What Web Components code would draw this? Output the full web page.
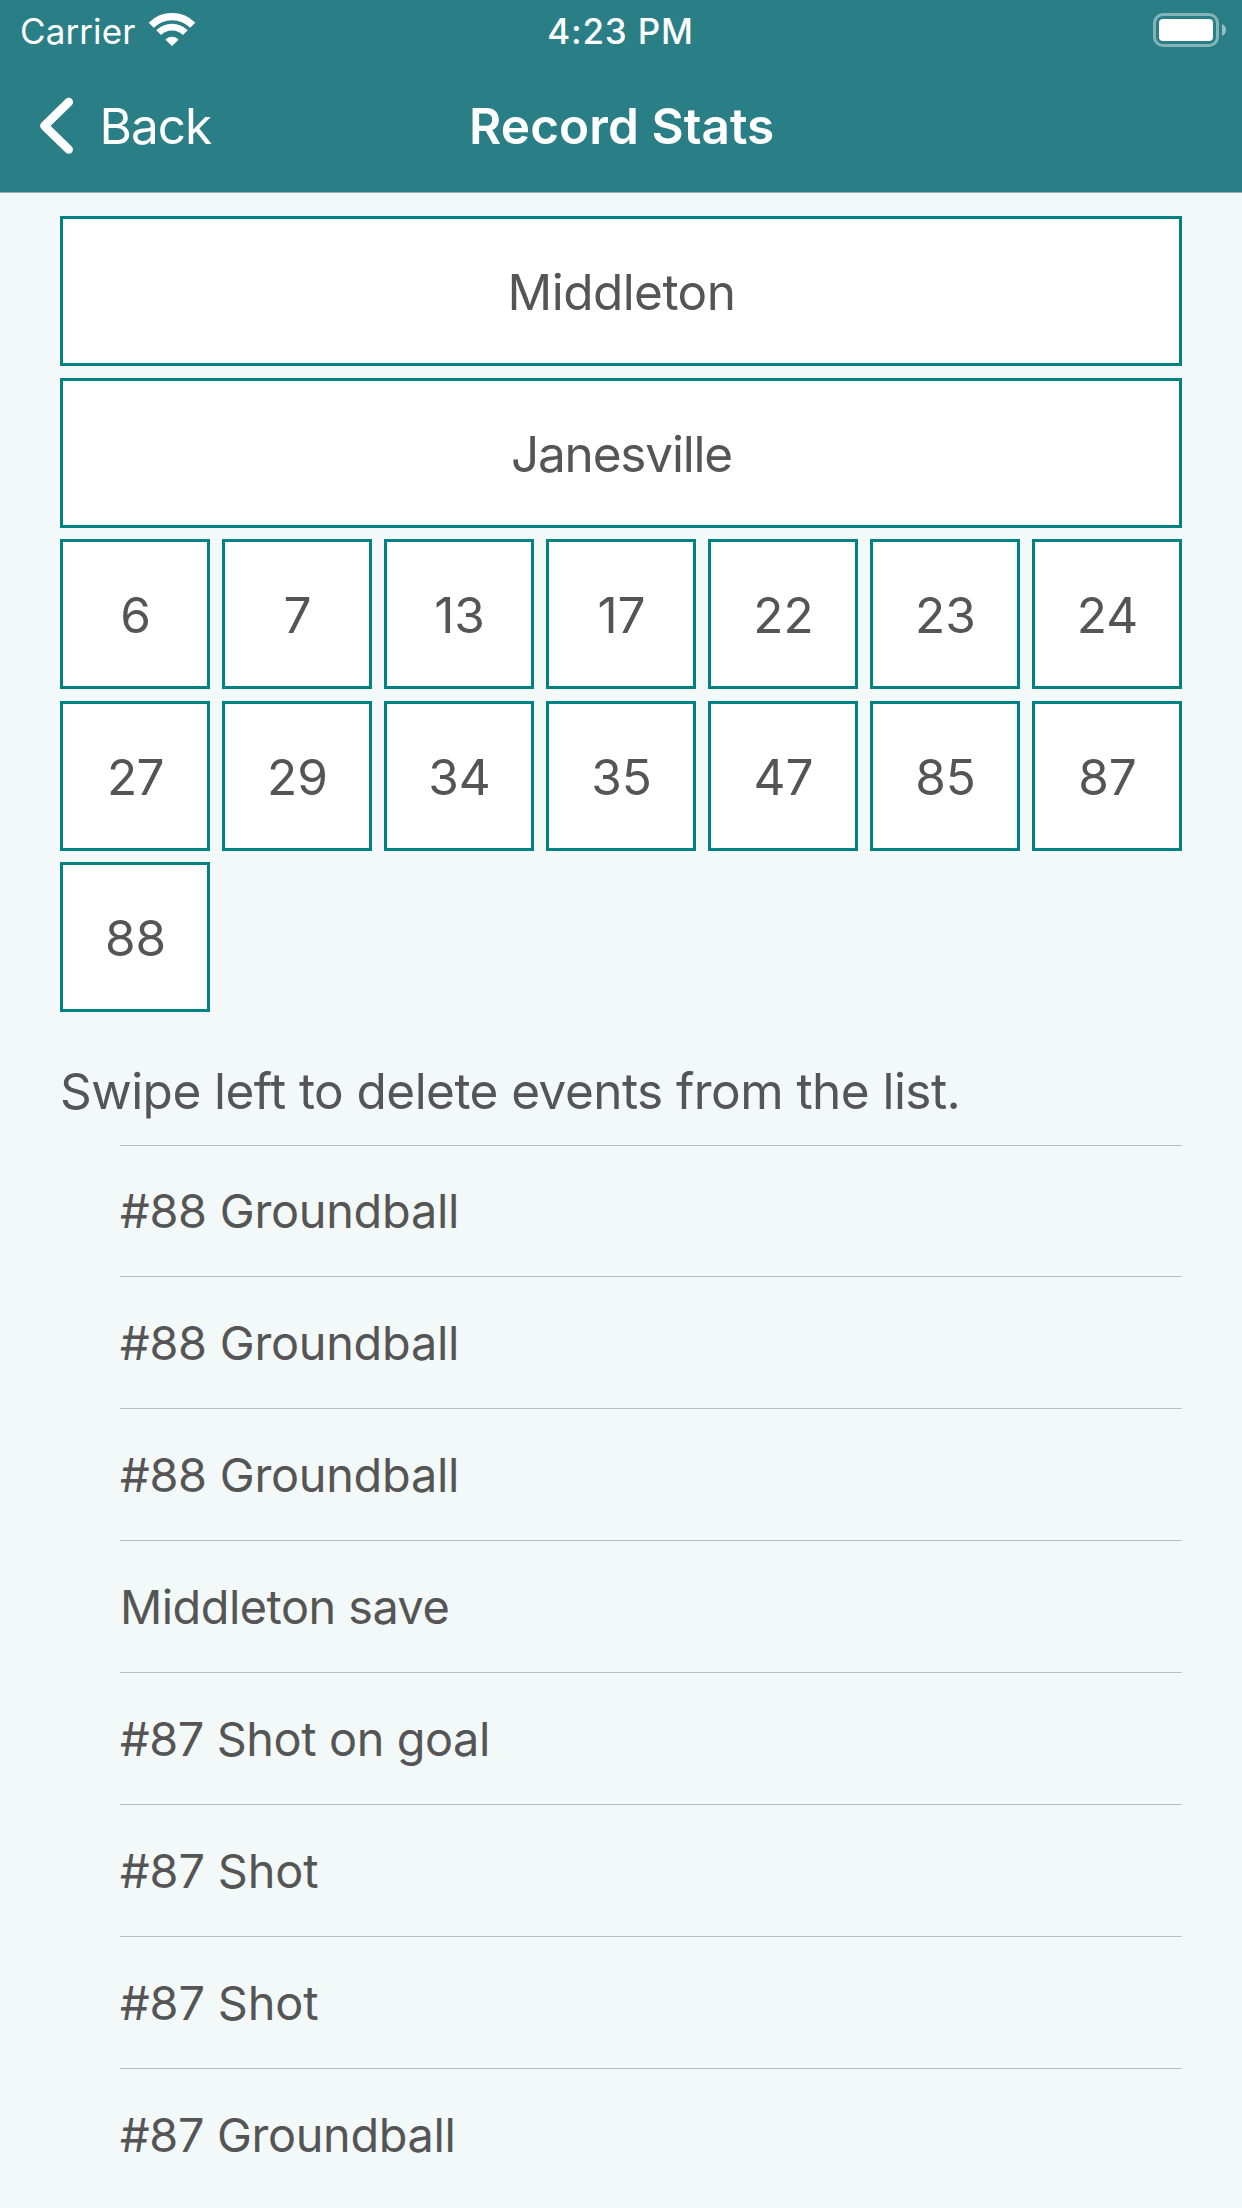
<!DOCTYPE html>
<html lang="en">
<head>
<meta charset="utf-8">
<title>Record Stats</title>
<style>
  html, body { margin: 0; padding: 0; }
  body { width: 1242px; height: 2208px; overflow: hidden; background: #f3f9f9; color: #555; font-family: Inter, "Liberation Sans", sans-serif; }
</style>
</head>
<body>
<stats-screen>
  <status-bar slot="header"><span slot="carrier">Carrier</span><span slot="time">4:23 PM</span></status-bar>
  <nav-bar slot="header"><span slot="back">Back</span><span slot="title">Record Stats</span></nav-bar>
  <stat-tile wide style="letter-spacing:-.55px">Middleton</stat-tile>
  <stat-tile wide style="letter-spacing:-1.18px">Janesville</stat-tile>
  <stat-tile>6</stat-tile><stat-tile>7</stat-tile><stat-tile>13</stat-tile><stat-tile>17</stat-tile><stat-tile>22</stat-tile><stat-tile>23</stat-tile><stat-tile>24</stat-tile>
  <stat-tile style="letter-spacing:-.6px">27</stat-tile><stat-tile>29</stat-tile><stat-tile>34</stat-tile><stat-tile>35</stat-tile><stat-tile>47</stat-tile><stat-tile>85</stat-tile><stat-tile>87</stat-tile>
  <stat-tile>88</stat-tile>
  <event-list slot="events">
    <span slot="hint">Swipe left to delete events from the list.</span>
    <event-row first>#88 Groundball</event-row>
    <event-row>#88 Groundball</event-row>
    <event-row>#88 Groundball</event-row>
    <event-row style="letter-spacing:-.5px">Middleton save</event-row>
    <event-row style="letter-spacing:-.388px">#87 Shot on goal</event-row>
    <event-row style="letter-spacing:-.1px">#87 Shot</event-row>
    <event-row style="letter-spacing:-.1px">#87 Shot</event-row>
    <event-row style="letter-spacing:-.33px">#87 Groundball</event-row>
  </event-list>
</stats-screen>
<script>
const define = (name, html) => customElements.define(name, class extends HTMLElement {
  constructor() {
    super();
    const t = document.createElement('template');
    t.innerHTML = html;
    this.attachShadow({ mode: 'open' }).append(t.content.cloneNode(true));
  }
});

define('stats-screen', `
<style>
  :host { display: flex; flex-direction: column; width: 1242px; height: 2208px; overflow: hidden; }
  header { display: flex; flex-direction: column; flex: none; height: 192px; background: #2a7e85; border-bottom: 1px solid #a5a6a8; color: #fff; }
  main { display: flex; flex-direction: column; padding: 23px 60px 0; }
  .tiles { display: grid; grid-template-columns: repeat(7, 150px); column-gap: 12px; row-gap: 11.5px; }
</style>
<header><slot name="header"></slot></header>
<main><div class="tiles"><slot></slot></div><slot name="events"></slot></main>`);

define('status-bar', `
<style>
  :host { display: grid; grid-template-columns: 1fr auto 1fr; box-sizing: border-box; height: 60px; font-size: 35px; line-height: 40px; }
  .left { display: flex; padding: 11px 0 0 20px; letter-spacing: .1px; }
  .time { padding: 11px 1px 0 0; font-weight: 550; letter-spacing: .8px; }
  .right { display: flex; justify-content: flex-end; padding: 13px 16px 0 0; }
  .wifi { margin: 2px 0 0 14px; }
  svg { display: block; flex: none; }
</style>
<div class="left"><slot name="carrier"></slot>
  <svg class="wifi" width="46" height="34" viewBox="0 0 46 34" fill="none" stroke="#fff">
    <path d="M2.25 12.25A29.35 29.35 0 0 1 43.75 12.25" stroke-width="7.1"/>
    <path d="M9.64 19.64A18.9 18.9 0 0 1 36.36 19.64" stroke-width="6.7"/>
    <path d="M23 32.5L16.9 26.6A9 9 0 0 1 29.1 26.6Z" fill="#fff" stroke-width="1" stroke-linejoin="round"/>
  </svg>
</div>
<div class="time"><slot name="time"></slot></div>
<div class="right">
  <svg width="73" height="34" viewBox="0 0 73 34">
    <rect x="1.5" y="1.5" width="63" height="31" rx="8.5" fill="none" stroke="#fff" stroke-opacity=".42" stroke-width="3"/>
    <rect x="6" y="6" width="54" height="22" rx="4" fill="#fff"/>
    <path d="M69 11C74.4 13.2 74.4 20.8 69 23Z" fill="#fff" fill-opacity=".5"/>
  </svg>
</div>`);

define('nav-bar', `
<style>
  :host { display: grid; grid-template-columns: 1fr auto 1fr; align-items: center; height: 132px; font-size: 49.5px; line-height: 60px; }
  .back { display: flex; align-items: center; gap: 26.5px; padding-left: 40px; letter-spacing: -1px; }
  .title { padding-left: 1.5px; font-weight: 600; letter-spacing: .07px; }
  svg { display: block; }
</style>
<div class="back">
  <svg width="33" height="58" viewBox="0 0 33 58" fill="none" stroke="#fff" stroke-width="8.6" stroke-linecap="round" stroke-linejoin="round"><path d="M28.7 5.1L4.4 28.8L28.7 52.5"/></svg>
  <slot name="back"></slot>
</div>
<div class="title"><slot name="title"></slot></div>`);

define('stat-tile', `
<style>
  :host { display: flex; justify-content: center; align-items: center; box-sizing: border-box; height: 150px; padding: 2px 0 0 1px; border: 3px solid #008282; background: #fff; font-size: 49.5px; line-height: 60px; }
  :host([wide]) { grid-column: 1 / -1; }
</style>
<slot></slot>`);

define('event-list', `
<style>
  :host { display: flex; flex-direction: column; }
  .hint { padding: 49px 0 24px; font-size: 49.5px; line-height: 60px; letter-spacing: -.547px; white-space: nowrap; }
  .rows { display: flex; flex-direction: column; padding-left: 60px; }
</style>
<div class="hint"><slot name="hint"></slot></div>
<div class="rows"><slot></slot></div>`);

define('event-row', `
<style>
  :host { display: block; box-sizing: border-box; height: 132px; border-top: 1px solid #b9bebf; font-size: 46.8px; line-height: 132px; letter-spacing: -.247px; white-space: nowrap; }
  :host([first]) { height: 131px; line-height: 130px; }
</style>
<slot></slot>`);
</script>
</body>
</html>
